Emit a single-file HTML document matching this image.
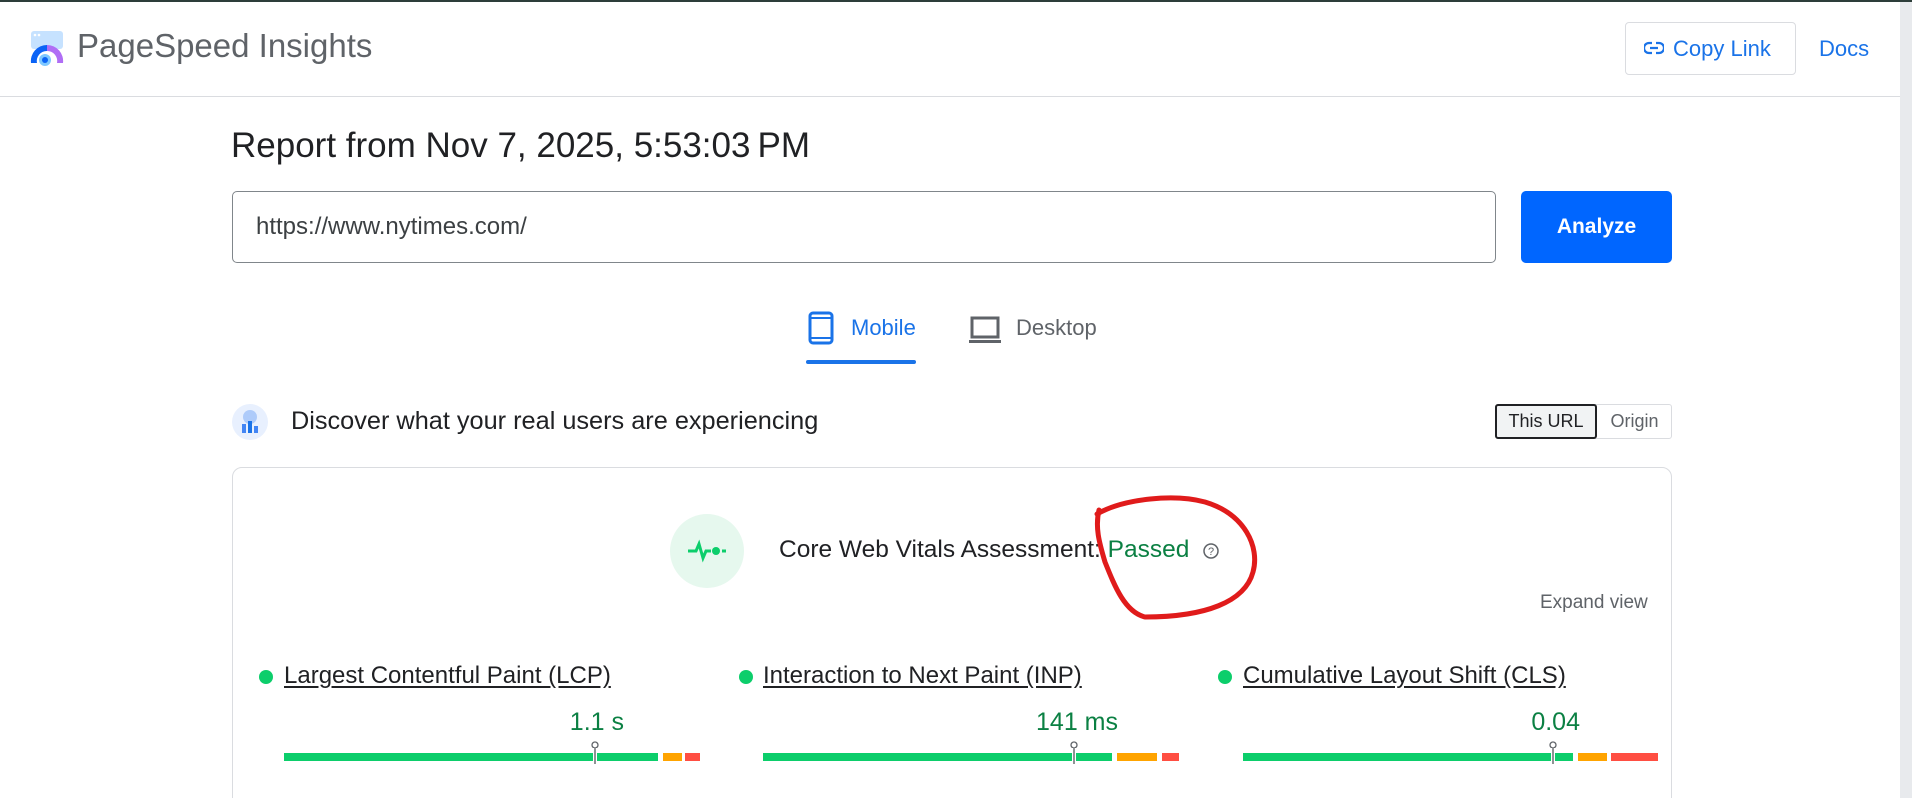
<!DOCTYPE html>
<html style="width:1912px;height:798px;overflow:hidden"><head><meta charset="utf-8"><style>
*{margin:0;padding:0;box-sizing:border-box}
body{width:1912px;height:798px;overflow:hidden;background:#fff;font-family:"Liberation Sans",Arial,sans-serif;position:relative;color:#202124}
.a{position:absolute;white-space:nowrap}
.lbl{font-size:24px;color:#202124;text-decoration:underline;text-underline-offset:3px}
.val{font-size:25px;color:#0b8043;text-align:right}
.dot{width:14px;height:14px;border-radius:50%;background:#0cce6b}
.seg{position:absolute;height:8px}
</style></head><body>
<div class="a" style="left:0;top:0;width:1912px;height:2px;background:#2d3e3a"></div>
<div class="a" style="left:1900px;top:2px;width:12px;height:796px;background:#e8eaed"></div>
<svg class="a" style="left:29px;top:31px" width="36" height="36" viewBox="0 0 36 36">
<rect x="2" y="0" width="32" height="18" rx="3" fill="#c6e2ff"/>
<circle cx="6" cy="4" r="1.3" fill="#fff"/><circle cx="10" cy="4" r="1.3" fill="#fff"/>
<path d="M2 32 A16 16 0 0 1 18 14 L18 20 A10 10 0 0 0 8 32Z" fill="#0b63f6"/>
<path d="M18 14 A16 16 0 0 1 34 32 L28 32 A10 10 0 0 0 18 20Z" fill="#b06ef5"/>
<circle cx="16" cy="29" r="6" fill="#7ec8ff"/><circle cx="16" cy="29" r="3" fill="#0b63f6"/>
</svg>
<div class="a" style="left:77px;top:27px;font-size:33px;color:#5f6368">PageSpeed Insights</div>
<div class="a" style="left:1625px;top:22px;width:171px;height:53px;border:1px solid #dadce0;border-radius:4px"></div>
<svg class="a" style="left:1644px;top:41px" width="20" height="14" viewBox="0 0 20 14"><path d="M8 2H5a5 5 0 0 0 0 10h3M12 2h3a5 5 0 0 1 0 10h-3M6 7h8" stroke="#1a73e8" stroke-width="2.2" fill="none"/></svg>
<div class="a" style="left:1673px;top:36px;font-size:22px;color:#1a73e8">Copy Link</div>
<div class="a" style="left:1819px;top:36px;font-size:22px;color:#1a73e8">Docs</div>
<div class="a" style="left:0;top:96px;width:1900px;height:1px;background:#dadce0"></div>
<div class="a" style="left:231px;top:126px;font-size:35px;color:#202124">Report from Nov 7, 2025, 5:53:03&#8201;PM</div>
<div class="a" style="left:232px;top:191px;width:1264px;height:72px;border:1px solid #80868b;border-radius:5px"></div>
<div class="a" style="left:256px;top:213px;font-size:24px;color:#3c4043">https://www.nytimes.com/</div>
<div class="a" style="left:1521px;top:191px;width:151px;height:72px;background:#0066ff;border-radius:5px;color:#fff;font-size:21px;font-weight:bold;text-align:center;line-height:72px">Analyze</div>
<svg class="a" style="left:808px;top:311px" width="26" height="34" viewBox="0 0 26 34"><rect x="2" y="2" width="22" height="30" rx="3" stroke="#1a73e8" stroke-width="3" fill="none"/><path d="M2 7h22M2 27h22" stroke="#1a73e8" stroke-width="2"/></svg>
<div class="a" style="left:851px;top:315px;font-size:22px;color:#1a73e8">Mobile</div>
<div class="a" style="left:806px;top:360px;width:110px;height:4px;background:#1a73e8;border-radius:2px"></div>
<svg class="a" style="left:968px;top:316px" width="34" height="28" viewBox="0 0 34 28"><rect x="4" y="2" width="26" height="19" stroke="#5f6368" stroke-width="3" fill="none"/><rect x="1" y="24" width="32" height="3" fill="#5f6368"/></svg>
<div class="a" style="left:1016px;top:315px;font-size:22px;color:#5f6368">Desktop</div>
<svg class="a" style="left:232px;top:404px" width="36" height="36" viewBox="0 0 36 36"><circle cx="18" cy="18" r="18" fill="#e8f0fe"/><circle cx="18" cy="13" r="7" fill="#aecbfa"/><rect x="10" y="20" width="4" height="9" fill="#4285f4"/><rect x="16" y="17" width="4" height="12" fill="#1a73e8"/><rect x="22" y="22" width="4" height="7" fill="#4285f4"/></svg>
<div class="a" style="left:291px;top:407px;font-size:25.3px;color:#202124">Discover what your real users are experiencing</div>
<div class="a" style="left:1495px;top:404px;width:177px;height:35px;border:1px solid #dadce0;border-radius:3px"></div>
<div class="a" style="left:1495px;top:404px;width:102px;height:35px;border:2px solid #202124;border-radius:3px;background:#f1f3f4;font-size:18px;text-align:center;line-height:31px">This URL</div>
<div class="a" style="left:1597px;top:404px;width:75px;height:35px;font-size:18px;color:#5f6368;text-align:center;line-height:35px">Origin</div>
<div class="a" style="left:232px;top:467px;width:1440px;height:345px;border:1px solid #dadce0;border-radius:10px"></div>
<svg class="a" style="left:670px;top:514px" width="74" height="74" viewBox="0 0 74 74"><circle cx="37" cy="37" r="37" fill="#e6f8ee"/><path d="M18 37h8l3-7 4 14 3-7h5" stroke="#0cce6b" stroke-width="3" fill="none"/><circle cx="46" cy="37" r="4" fill="#0cce6b"/><path d="M52 37h4" stroke="#0cce6b" stroke-width="3"/></svg>
<div class="a" style="left:779px;top:536px;font-size:24.5px;color:#202124">Core Web Vitals Assessment: <span style="color:#0b8043">Passed</span></div>
<svg class="a" style="left:1202px;top:542px" width="18" height="18" viewBox="0 0 18 18"><circle cx="9" cy="9" r="7" stroke="#5f6368" stroke-width="1.5" fill="none"/><text x="9" y="13" font-size="11" text-anchor="middle" fill="#5f6368" font-family="Liberation Sans">?</text></svg>
<svg class="a" style="left:1085px;top:492px" width="180" height="132" viewBox="0 0 180 132"><path d="M12 22 C40 6 90 2 120 10 C160 22 175 55 168 80 C160 110 120 125 60 125 C40 120 30 95 20 70 C14 50 10 35 14 18" stroke="#e01b1b" stroke-width="5" fill="none" stroke-linecap="round"/></svg>
<div class="a" style="left:1540px;top:592px;font-size:19px;color:#5f6368">Expand view</div>
<div class="a dot" style="left:259px;top:670px"></div>
<div class="a lbl" style="left:284px;top:662px">Largest Contentful Paint (LCP)</div>
<div class="a val" style="left:500px;top:708px;width:124px">1.1 s</div>
<div class="a dot" style="left:739px;top:670px"></div>
<div class="a lbl" style="left:763px;top:662px">Interaction to Next Paint (INP)</div>
<div class="a val" style="left:980px;top:708px;width:138px">141 ms</div>
<div class="a dot" style="left:1218px;top:670px"></div>
<div class="a lbl" style="left:1243px;top:662px">Cumulative Layout Shift (CLS)</div>
<div class="a val" style="left:1460px;top:708px;width:120px">0.04</div>
<div class="seg" style="left:284px;top:753px;width:374px;background:#0cce6b"></div>
<div class="seg" style="left:663px;top:753px;width:19px;background:#ffa400"></div>
<div class="seg" style="left:685px;top:753px;width:15px;background:#ff4e42"></div>
<div class="seg" style="left:763px;top:753px;width:349px;background:#0cce6b"></div>
<div class="seg" style="left:1117px;top:753px;width:40px;background:#ffa400"></div>
<div class="seg" style="left:1162px;top:753px;width:17px;background:#ff4e42"></div>
<div class="seg" style="left:1243px;top:753px;width:330px;background:#0cce6b"></div>
<div class="seg" style="left:1578px;top:753px;width:29px;background:#ffa400"></div>
<div class="seg" style="left:1611px;top:753px;width:47px;background:#ff4e42"></div>
<svg class="a" style="left:590px;top:740px" width="10" height="24"><circle cx="5" cy="5" r="3" fill="#fff" stroke="#5f6368" stroke-width="1.3"/><rect x="3" y="8" width="4" height="16" fill="#fff"/><rect x="4.3" y="8" width="1.4" height="16" fill="#5f6368"/></svg>
<svg class="a" style="left:1069px;top:740px" width="10" height="24"><circle cx="5" cy="5" r="3" fill="#fff" stroke="#5f6368" stroke-width="1.3"/><rect x="3" y="8" width="4" height="16" fill="#fff"/><rect x="4.3" y="8" width="1.4" height="16" fill="#5f6368"/></svg>
<svg class="a" style="left:1548px;top:740px" width="10" height="24"><circle cx="5" cy="5" r="3" fill="#fff" stroke="#5f6368" stroke-width="1.3"/><rect x="3" y="8" width="4" height="16" fill="#fff"/><rect x="4.3" y="8" width="1.4" height="16" fill="#5f6368"/></svg>
</body></html>
